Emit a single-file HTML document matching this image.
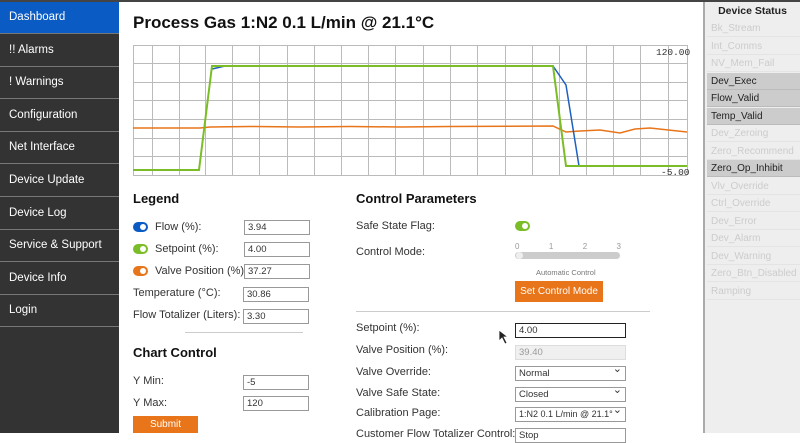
<!DOCTYPE html>
<html><head><style>
*{margin:0;padding:0;box-sizing:border-box}
body{width:800px;height:433px;overflow:hidden;background:#fff;font-family:"Liberation Sans",Arial,sans-serif;position:relative;color:#222}
.a{position:absolute;white-space:nowrap}
#top{left:0;top:0;width:800px;height:2px;background:#444}
#side{left:0;top:2px;width:119px;height:431px;background:#333}
.nav{position:absolute;left:0;width:119px;height:32px;color:#fff;font-size:11.5px;padding-left:9px;line-height:31px;border-bottom:1px solid #777;white-space:nowrap}
.h{font-weight:bold;font-size:13px;color:#111}
.lbl{font-size:11px;color:#333}
.in{position:absolute;height:15px;border:1px solid #999;font-size:9.5px;padding-left:3px;line-height:13px;background:#fff;color:#333;white-space:nowrap;overflow:hidden}
.tg{position:absolute;width:15px;height:10px;border-radius:5px}
.tg::after{content:"";position:absolute;right:2px;top:2px;width:6px;height:6px;border-radius:3px;background:#fff}
.sel::after{content:"⌄";position:absolute;right:3px;top:-4px;font-size:11px;background:#fff}
#ds{left:703px;top:2px;width:97px;height:431px;background:#eee;border-left:2px solid #aaa}
.st{position:absolute;left:2px;width:95px;height:17px;font-size:10px;color:#ccc;padding-left:4px;line-height:17px;border-bottom:1px solid #e4e4e4;white-space:nowrap}
.on{background:#ccc;color:#222;border-bottom:1px solid #bbb}
</style></head><body>
<div id="top" class="a"></div>
<div id="side" class="a">
<div class="nav" style="top:0;background:#0a5bc4">Dashboard</div>
<div class="nav" style="top:33px">!! Alarms</div>
<div class="nav" style="top:65px">! Warnings</div>
<div class="nav" style="top:98px">Configuration</div>
<div class="nav" style="top:130px">Net Interface</div>
<div class="nav" style="top:163px">Device Update</div>
<div class="nav" style="top:196px">Device Log</div>
<div class="nav" style="top:228px">Service &amp; Support</div>
<div class="nav" style="top:261px">Device Info</div>
<div class="nav" style="top:293px">Login</div>
</div>
<div class="a" style="left:133px;top:13px;font-size:17px;font-weight:bold;color:#111">Process Gas 1:N2 0.1 L/min @ 21.1°C</div>
<svg class="a" style="left:0;top:0" width="700" height="190">
<g stroke="#bbb" stroke-width="1" fill="none">
<path d="M133.5 45V175M152.5 45V175M179.5 45V175M205.5 45V175M232.5 45V175M259.5 45V175M287.5 45V175M314.5 45V175M341.5 45V175M368.5 45V175M395.5 45V175M423.5 45V175M450.5 45V175M477.5 45V175M505.5 45V175M532.5 45V175M559.5 45V175M586.5 45V175M613.5 45V175M640.5 45V175M668.5 45V175M687.5 45V175"/>
<path d="M133 45.5H687M133 63.5H687M133 82.5H687M133 100.5H687M133 119.5H687M133 138.5H687M133 156.5H687M133 175.5H687"/>
</g>
<polyline fill="none" stroke="#e8751a" stroke-width="1.5" points="133,128 200,128 210,127 250,126.5 300,127 350,126.5 400,127 450,126.5 553,126 566,132 580,131 600,130 620,133 635,129 650,128 687,132"/>
<polyline fill="none" stroke="#1f5fbf" stroke-width="1.5" points="212,69 225,66 553,66 566,85 579,166"/>
<polyline fill="none" stroke="#7bbd26" stroke-width="2" points="133,170 199,170 212,66 553,66 566,166 687,166"/>
<text x="656" y="55" font-family="Liberation Mono,monospace" font-size="9.5" fill="#333">120.00</text>
<text x="661" y="175" font-family="Liberation Mono,monospace" font-size="9.5" fill="#333">-5.00</text>
</svg>
<div class="a h" style="left:133px;top:191px">Legend</div>
<div class="tg" style="left:133px;top:222px;background:#0a5bc4"></div>
<div class="tg" style="left:133px;top:244px;background:#7bbd26"></div>
<div class="tg" style="left:133px;top:266px;background:#e8751a"></div>
<div class="a lbl" style="left:155px;top:221px">Flow (%):</div>
<div class="a lbl" style="left:155px;top:243px">Setpoint (%):</div>
<div class="a lbl" style="left:155px;top:265px">Valve Position (%):</div>
<div class="a lbl" style="left:133px;top:287px">Temperature (°C):</div>
<div class="a lbl" style="left:133px;top:309px">Flow Totalizer (Liters):</div>
<div class="in" style="left:244px;top:220px;width:66px">3.94</div>
<div class="in" style="left:244px;top:242px;width:66px">4.00</div>
<div class="in" style="left:244px;top:264px;width:66px">37.27</div>
<div class="in" style="left:243px;top:287px;width:66px">30.86</div>
<div class="in" style="left:243px;top:309px;width:66px">3.30</div>
<div class="a" style="left:185px;top:332px;width:118px;height:1px;background:#ccc"></div>
<div class="a h" style="left:133px;top:345px">Chart Control</div>
<div class="a lbl" style="left:133px;top:375px">Y Min:</div>
<div class="a lbl" style="left:133px;top:397px">Y Max:</div>
<div class="in" style="left:243px;top:375px;width:66px">-5</div>
<div class="in" style="left:243px;top:396px;width:66px">120</div>
<div class="a" style="left:133px;top:416px;width:65px;height:17px;background:#e8751a;color:#fff;font-size:10px;text-align:center;line-height:18px">Submit</div>
<div class="a h" style="left:356px;top:191px">Control Parameters</div>
<div class="a lbl" style="left:356px;top:220px">Safe State Flag:</div>
<div class="tg" style="left:515px;top:221px;background:#7bbd26"></div>
<div class="a lbl" style="left:356px;top:246px">Control Mode:</div>
<div class="a" style="left:515px;top:242px;width:106px;font-size:8px;color:#999;display:flex;justify-content:space-between"><span>0</span><span>1</span><span>2</span><span>3</span></div>
<div class="a" style="left:515px;top:252px;width:105px;height:7px;border-radius:4px;background:#ccc"></div>
<div class="a" style="left:516px;top:252px;width:7px;height:7px;border-radius:4px;background:#eee"></div>
<div class="a" style="left:536px;top:268px;font-size:7.5px;color:#777">Automatic Control</div>
<div class="a" style="left:515px;top:281px;width:88px;height:21px;background:#e8751a;color:#fff;font-size:10px;text-align:center;line-height:21px">Set Control Mode</div>
<div class="a" style="left:356px;top:311px;width:294px;height:1px;background:#ccc"></div>
<div class="a lbl" style="left:356px;top:322px">Setpoint (%):</div>
<div class="a lbl" style="left:356px;top:344px">Valve Position (%):</div>
<div class="a lbl" style="left:356px;top:366px">Valve Override:</div>
<div class="a lbl" style="left:356px;top:387px">Valve Safe State:</div>
<div class="a lbl" style="left:356px;top:407px">Calibration Page:</div>
<div class="a lbl" style="left:356px;top:428px">Customer Flow Totalizer Control:</div>
<div class="in" style="left:515px;top:323px;width:111px;border:1px solid #222">4.00</div>
<div class="in" style="left:515px;top:345px;width:111px;background:#f0f0f0;border-color:#ddd;color:#999">39.40</div>
<div class="in sel" style="left:515px;top:366px;width:111px">Normal</div>
<div class="in sel" style="left:515px;top:387px;width:111px">Closed</div>
<div class="in sel" style="left:515px;top:407px;width:111px;font-size:9px">1:N2 0.1 L/min @ 21.1°C</div>
<div class="in" style="left:515px;top:428px;width:111px">Stop</div>
<svg class="a" style="left:498px;top:329px" width="12" height="16"><path d="M1 1L1 12L4 9L7 15L9 14L6 8L10 8Z" fill="#222" stroke="#fff" stroke-width=".8"/></svg>
<div id="ds" class="a">
<div class="a" style="left:0;top:3px;width:95px;text-align:center;font-weight:bold;font-size:10.5px;color:#222">Device Status</div>
<div class="st" style="top:18px">Bk_Stream</div>
<div class="st" style="top:35.5px">Int_Comms</div>
<div class="st" style="top:53px">NV_Mem_Fail</div>
<div class="st on" style="top:70.5px">Dev_Exec</div>
<div class="st on" style="top:88px">Flow_Valid</div>
<div class="st on" style="top:105.5px">Temp_Valid</div>
<div class="st" style="top:123px">Dev_Zeroing</div>
<div class="st" style="top:140.5px">Zero_Recommend</div>
<div class="st on" style="top:158px">Zero_Op_Inhibit</div>
<div class="st" style="top:175.5px">Vlv_Override</div>
<div class="st" style="top:193px">Ctrl_Override</div>
<div class="st" style="top:210.5px">Dev_Error</div>
<div class="st" style="top:228px">Dev_Alarm</div>
<div class="st" style="top:245.5px">Dev_Warning</div>
<div class="st" style="top:263px">Zero_Btn_Disabled</div>
<div class="st" style="top:280.5px">Ramping</div>
</div>
</body></html>
